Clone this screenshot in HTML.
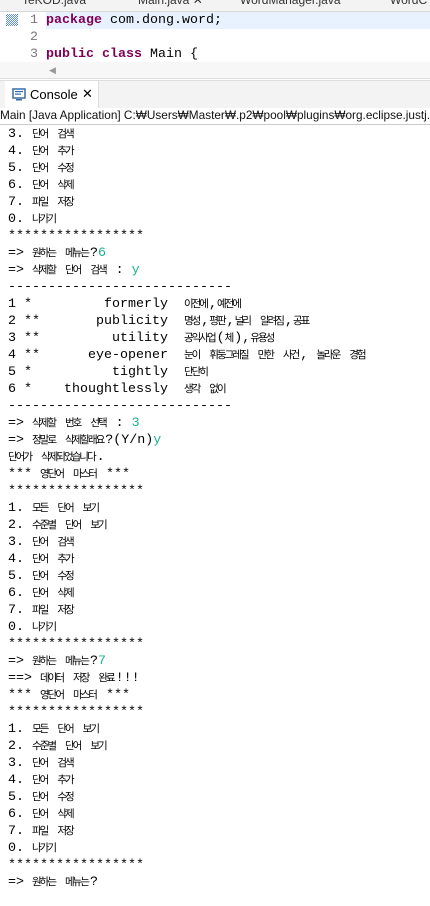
<!DOCTYPE html>
<html><head><meta charset="utf-8"><style>
body{margin:0;width:430px;height:906px;overflow:hidden;background:#fff;font-family:"Liberation Sans",sans-serif;position:relative}
.tabs{position:absolute;left:0;top:0;width:430px;height:11px;background:#f3f3f3;border-bottom:1px solid #d8d8d8;overflow:hidden}
.tab{position:absolute;top:-7px;font-size:12px;color:#333;white-space:nowrap}
.ed{position:absolute;left:0;top:12px;width:430px;height:50px;font-family:"Liberation Mono",monospace;font-size:13.33px}
.ln{position:absolute;height:17px;line-height:17px;left:0;width:430px;white-space:pre}
.num{position:absolute;left:24px;width:14px;text-align:right;color:#787878}
.code{position:absolute;left:46px;color:#000}
.kw{color:#7f0055;font-weight:bold}
.sb{position:absolute;left:0;top:62px;width:430px;height:16px;background:#f7f7f7;border-bottom:1px solid #ddd}
.cbar{position:absolute;left:0;top:80px;width:430px;height:27px;background:#f3f3f3;border-top:1px solid #ddd}
.ctab{position:absolute;left:5px;top:0;width:93px;height:27px;background:#fff;border-right:1px solid #ddd;font-size:13px}
.title{position:absolute;left:0;top:107px;width:430px;height:17px;line-height:17px;font-size:11.8px;white-space:nowrap;overflow:hidden;border-bottom:1px solid #ccc;color:#111}
pre{position:absolute;left:8px;top:126px;margin:0;font-family:"Liberation Mono",monospace;font-size:13.33px;line-height:17px;color:#000}
k{display:inline-block;height:17px;line-height:15px;vertical-align:top;font-family:"Noto Sans CJK KR",sans-serif;font-size:10.5px;letter-spacing:-2px;padding-right:2px}
g{color:#19b38c}
</style></head><body>
<div class="tabs">
<span class="tab" style="left:22px">TeKOD.java</span>
<span class="tab" style="left:138px">Main.java ✕</span>
<span class="tab" style="left:240px">WordManager.java</span>
<span class="tab" style="left:390px">WordC</span>
</div>
<div class="ed">
<div style="position:absolute;left:6px;top:2px;width:12px;height:12px;background:repeating-conic-gradient(#5b8fd6 0 25%,#fff 0 50%) 0 0/2px 2px"></div>
<div class="ln" style="top:0;background:#e8f2fe;left:46px;width:384px"></div>
<div class="ln" style="top:0"><span class="num">1</span><span class="code"><span class="kw">package</span> com.dong.word;</span></div>
<div class="ln" style="top:17px"><span class="num">2</span></div>
<div class="ln" style="top:34px"><span class="num">3</span><span class="code"><span class="kw">public</span> <span class="kw">class</span> Main {</span></div>
</div>
<div class="sb"><span style="position:absolute;left:49px;top:3px;font-size:9px;color:#999">◀</span></div>
<div class="cbar"><div class="ctab">
<svg style="position:absolute;left:7px;top:7px" width="14" height="13" viewBox="0 0 14 13"><rect x="1" y="1" width="12" height="9" fill="#fff" stroke="#3a6aa8" stroke-width="1.5"/><rect x="3" y="3" width="8" height="1.2" fill="#3a6aa8"/><rect x="3" y="5.5" width="6" height="1.2" fill="#3a6aa8"/><rect x="4" y="11" width="6" height="1.5" fill="#3a6aa8"/></svg>
<span style="position:absolute;left:25px;top:6px">Console</span>
<span style="position:absolute;left:77px;top:5px;font-size:13px">✕</span>
</div></div>
<div class="title">Main [Java Application] C:₩Users₩Master₩.p2₩pool₩plugins₩org.eclipse.justj.</div>
<pre>3. <k>단어</k> <k>검색</k>
4. <k>단어</k> <k>추가</k>
5. <k>단어</k> <k>수정</k>
6. <k>단어</k> <k>삭제</k>
7. <k>파일</k> <k>저장</k>
0. <k>나가기</k>
*****************
=> <k>원하는</k> <k>메뉴는</k>?<g>6</g>
=> <k>삭제할</k> <k>단어</k> <k>검색</k> : <g>y</g>
----------------------------
1 *         formerly  <k>이전에</k>,<k>예전에</k>
2 **       publicity  <k>명성</k>,<k>평판</k>,<k>널리</k> <k>알려짐</k>,<k>공표</k>
3 **         utility  <k>공익사업</k>(<k>체</k>),<k>유용성</k>
4 **      eye-opener  <k>눈이</k> <k>휘둥그레질</k> <k>만한</k> <k>사건</k>, <k>놀라운</k> <k>경험</k>
5 *          tightly  <k>단단히</k>
6 *    thoughtlessly  <k>생각</k> <k>없이</k>
----------------------------
=> <k>삭제할</k> <k>번호</k> <k>선택</k> : <g>3</g>
=> <k>정말로</k> <k>삭제할래요</k>?(Y/n)<g>y</g>
<k>단어가</k> <k>삭제되었습니다</k>.
*** <k>영단어</k> <k>마스터</k> ***
*****************
1. <k>모든</k> <k>단어</k> <k>보기</k>
2. <k>수준별</k> <k>단어</k> <k>보기</k>
3. <k>단어</k> <k>검색</k>
4. <k>단어</k> <k>추가</k>
5. <k>단어</k> <k>수정</k>
6. <k>단어</k> <k>삭제</k>
7. <k>파일</k> <k>저장</k>
0. <k>나가기</k>
*****************
=> <k>원하는</k> <k>메뉴는</k>?<g>7</g>
==> <k>데이터</k> <k>저장</k> <k>완료</k>!!!
*** <k>영단어</k> <k>마스터</k> ***
*****************
1. <k>모든</k> <k>단어</k> <k>보기</k>
2. <k>수준별</k> <k>단어</k> <k>보기</k>
3. <k>단어</k> <k>검색</k>
4. <k>단어</k> <k>추가</k>
5. <k>단어</k> <k>수정</k>
6. <k>단어</k> <k>삭제</k>
7. <k>파일</k> <k>저장</k>
0. <k>나가기</k>
*****************
=> <k>원하는</k> <k>메뉴는</k>?</pre>
</body></html>
